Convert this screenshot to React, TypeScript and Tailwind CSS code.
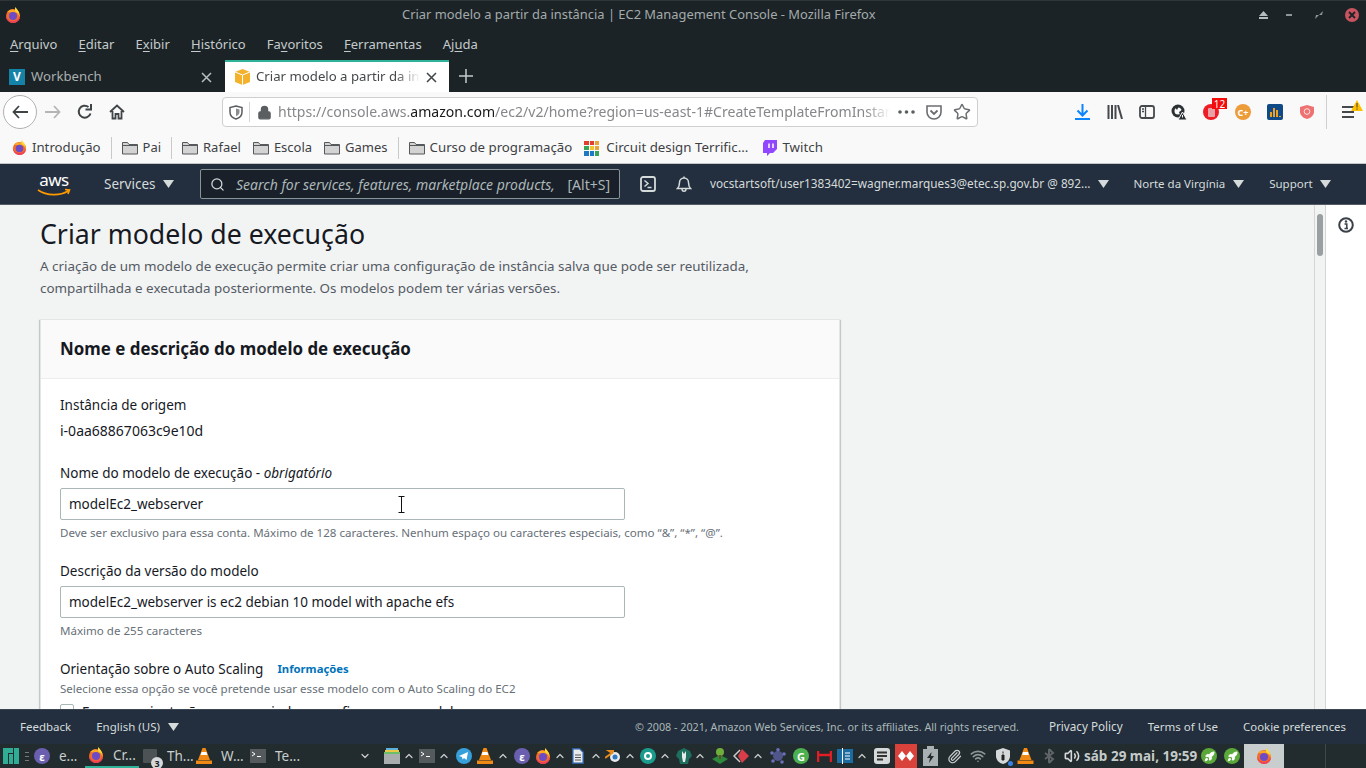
import { ReactNode } from "react";
import { ChevronUp, ChevronDown, Lock, Star, Search, Paperclip, Volume2, Wifi, Rocket } from "lucide-react";

const sans = "font-['Noto_Sans',sans-serif]";

function Fox({ size = 16 }: { size?: number }) {
  return (
    <svg width={size} height={size} viewBox="0 0 16 16" className="shrink-0">
      <circle cx="8" cy="9" r="7" fill="#f26b2a" />
      <path d="M2 5 C5 2 8 2 9 3 C13 4 15 7 15 10 L12 6 Z" fill="#f9a825" />
      <path d="M10 0 C12 2 14 4 14.5 7 L10 4 Z" fill="#fdd835" />
      <circle cx="8" cy="9" r="4" fill="#6d4bc4" />
      <path d="M1 9 C1 13 5 16 8 16 C12 16 15 13 15 9 C14 12 11 14 8 14 C5 14 2 12 1 9 Z" fill="#ef3f5a" />
    </svg>
  );
}

function Folder() {
  return (
    <svg width="16" height="14" viewBox="0 0 16 14" className="shrink-0">
      <path d="M.5 13V1.500h5l1.500 2h8.500V13Z" fill="#d3d3d3" stroke="#55595c" />
      <path d="M.5 4.500h15" stroke="#55595c" />
    </svg>
  );
}

function Caret({ className = "" }: { className?: string }) {
  return (
    <svg width="11" height="8" viewBox="0 0 11 8" className={className}>
      <path d="M0 0h11L5.500 8Z" fill="currentColor" />
    </svg>
  );
}

function Close({ color }: { color: string }) {
  return (
    <svg width="11" height="11" viewBox="0 0 11 11" className="ml-auto shrink-0">
      <path d="M1 1l9 9M10 1l-9 9" stroke={color} strokeWidth="1.500" />
    </svg>
  );
}

function Term() {
  return (
    <svg width="16" height="14" viewBox="0 0 16 14" className="shrink-0">
      <rect width="16" height="14" fill="#555b5c" />
      <path d="M2 3l3 2-3 2M7 7.500h4" fill="none" stroke="#fff" />
    </svg>
  );
}

function Cone({ w = 16 }: { w?: number }) {
  return (
    <svg width={w} height="16" viewBox="0 0 16 16" className="shrink-0">
      <path d="M6.500 0h3L14 12H2Z" fill="#f08a14" />
      <path d="M5.500 4h5l.8 3H4.700Z" fill="#fff" />
      <path d="M0 12.500h16V16H0Z" fill="#f08a14" />
    </svg>
  );
}

function Emacs() {
  return (
    <div className="flex h-4 w-4 shrink-0 items-center justify-center rounded-full bg-[#6a5fae] text-[11px] font-bold leading-none text-white">ε</div>
  );
}

function Up({ className = "" }: { className?: string }) {
  return <ChevronUp size={12} strokeWidth={2.5} className={`shrink-0 text-[#c8cccc] ${className}`} />;
}

function Bookmark({ children, icon, className = "" }: { children: ReactNode; icon: ReactNode; className?: string }) {
  return (
    <div className={`flex items-center gap-[5px] ${className}`}>
      {icon}
      <span>{children}</span>
    </div>
  );
}

function BarSep({ className = "" }: { className?: string }) {
  return <div className={`h-[22px] w-px bg-[#c9c9c9] ${className}`} />;
}

function Field({ value }: { value: string }) {
  return (
    <div className="mt-[5px] flex h-8 w-[565px] items-center rounded-[2px] border border-[#aab7b8] bg-white px-2 text-[13.5px] text-[#16191f]">
      {value}
    </div>
  );
}

function Mn({ children }: { children: string }) {
  return <span className="underline underline-offset-2">{children}</span>;
}

function TitleBar() {
  return (
    <div className="flex h-[30px] shrink-0 items-center border-t border-[#2d3538] bg-[#1b2326] pb-[2px] pl-[5px] pr-[7px]">
      <Fox size={16} />
      <div className="ml-[381px] text-[12.9px] text-[#a4aaac]">Criar modelo a partir da instância | EC2 Management Console - Mozilla Firefox</div>
      <div className="ml-auto flex items-center">
        <svg width="9" height="8" viewBox="0 0 9 8"><path d="M4.500 0 9 5H0ZM0 6h9v2H0Z" fill="#b4bcbd" /></svg>
        <div className="ml-[18px] h-[2px] w-[6px] bg-[#8f9697]" />
        <svg width="10" height="10" viewBox="0 0 10 10" className="ml-[22px]"><path d="M5 5 9 1 8 5Zm0 0L1 9 2 5Z" fill="#8f9697" /></svg>
        <div className="ml-[21px] flex h-[14px] w-[14px] items-center justify-center rounded-full bg-[#c9545f]">
          <svg width="8" height="8" viewBox="0 0 8 8"><path d="M1 1l6 6M7 1 1 7" stroke="#1b2326" strokeWidth="1.800" /></svg>
        </div>
      </div>
    </div>
  );
}

function MenuBar() {
  return (
    <div className="flex h-[30px] shrink-0 items-center gap-[21.200px] bg-[#1b2326] pl-[10px] text-[13px] text-[#c5cbcc]">
      <span><Mn>A</Mn>rquivo</span>
      <span><Mn>E</Mn>ditar</span>
      <span>E<Mn>x</Mn>ibir</span>
      <span><Mn>H</Mn>istórico</span>
      <span>Fa<Mn>v</Mn>oritos</span>
      <span><Mn>F</Mn>erramentas</span>
      <span>Aj<Mn>u</Mn>da</span>
    </div>
  );
}

function Tabs() {
  return (
    <div className="flex h-8 shrink-0 items-stretch bg-[#1b2326] text-[13.2px]">
      <div className="flex w-[225px] items-center pl-[9px] pr-[13px] pt-[2px] text-[#a9afb0]">
        <div className="flex h-4 w-4 items-center justify-center bg-[#1582a8] text-[12px] font-bold leading-none text-white">V</div>
        <span className="ml-[6px]">Workbench</span>
        <Close color="#b9bebf" />
      </div>
      <div className="flex w-[224px] items-center border-t-2 border-[#2eb398] bg-white pl-[10px] pr-[12px] text-[#45494c]">
        <svg width="15" height="16" viewBox="0 0 15 16" className="shrink-0">
          <path d="M7.500 0 15 3v10l-7.500 3L0 13V3Z" fill="#f3b12c" />
          <path d="M0 3l7.500 3L15 3M7.500 6v10" stroke="#fff" fill="none" />
        </svg>
        <span className="ml-[6px] w-[164px] overflow-hidden whitespace-nowrap [mask-image:linear-gradient(to_right,black_85%,transparent)]">Criar modelo a partir da in</span>
        <Close color="#3f4447" />
      </div>
      <svg width="14" height="14" viewBox="0 0 14 14" className="ml-[10px] self-center"><path d="M7 0v14M0 7h14" stroke="#c5cbcc" strokeWidth="1.500" /></svg>
    </div>
  );
}

function NavToolbar() {
  return (
    <div className="flex h-10 shrink-0 items-center bg-[#f9f9fa] pl-[3px] text-[#45494c]">
      <div className="flex h-[34px] w-[34px] items-center justify-center rounded-full border border-[#b1b1b1] bg-white">
        <svg width="16" height="14" viewBox="0 0 16 14"><path d="M7 1 1.500 7 7 13M2 7h14" fill="none" stroke="#3f4447" strokeWidth="1.800" /></svg>
      </div>
      <svg width="16" height="14" viewBox="0 0 16 14" className="ml-[8px]"><path d="M9 1l5.500 6L9 13M14 7H0" fill="none" stroke="#b4b5b7" strokeWidth="1.800" /></svg>
      <svg width="16" height="16" viewBox="0 0 16 16" className="ml-[16px]"><path d="M13.500 9.500A6 6 0 1 1 11.500 3M14 0v5.500H8.500" fill="none" stroke="#3f4447" strokeWidth="2" /></svg>
      <svg width="16" height="16" viewBox="0 0 16 16" className="ml-[16px]"><path d="M1 8 8 1.500 15 8M3.500 7v7.500H6.500V10h3v4.500h3V7" fill="none" stroke="#3f4447" strokeWidth="1.800" /></svg>
      <div className="ml-[97px] flex h-[30px] w-[756px] items-center rounded-[4px] border border-[#cfcfd1] bg-white text-[14px]">
        <svg width="14" height="15" viewBox="0 0 14 15" className="ml-[6px]"><path d="M7 1 13 2.500V7c0 3.500-2.500 6-6 7C3.500 13 1 10.500 1 7V2.500Z" fill="none" stroke="#5a5e61" strokeWidth="1.500" /><path d="M7 3.500 10.500 4.400V7c0 2-1.500 3.500-3.500 4.300Z" fill="#8a8d90" /></svg>
        <div className="ml-[6px] h-[20px] w-px bg-[#d5d5d7]" />
        <Lock size={15} fill="#5a5e61" strokeWidth={2} className="ml-[7px] shrink-0 text-[#5a5e61]" />
        <div className="ml-[6px] w-[612px] overflow-hidden whitespace-nowrap text-[14.05px] text-[#85878a] [mask-image:linear-gradient(to_right,black_96%,transparent)]">
          https://console.aws.<span className="text-[#18191b]">amazon.com</span>/ec2/v2/home?region=us-east-1#CreateTemplateFromInstan
        </div>
        <svg width="17" height="4" viewBox="0 0 17 4" className="ml-[8px] shrink-0"><circle cx="2" cy="2" r="1.800" fill="#5a5e61" /><circle cx="8.500" cy="2" r="1.800" fill="#5a5e61" /><circle cx="15" cy="2" r="1.800" fill="#5a5e61" /></svg>
        <svg width="16" height="15" viewBox="0 0 16 15" className="ml-[11px]"><path d="M1 1h14v6c0 4-3 7-7 7s-7-3-7-7Z" fill="none" stroke="#6b6e71" strokeWidth="1.600" /><path d="M4.500 5.500 8 9l3.500-3.500" fill="none" stroke="#6b6e71" strokeWidth="1.800" /></svg>
        <Star size={18} strokeWidth={2} className="ml-[11px] text-[#6b6e71]" />
      </div>
      <svg width="15" height="16" viewBox="0 0 15 16" className="ml-[97px]"><path d="M7.500 0v11M2.500 6.500l5 5 5-5M0 15h15" fill="none" stroke="#0a84ff" strokeWidth="2" /></svg>
      <svg width="16" height="14" viewBox="0 0 16 14" className="ml-[17px]"><path d="M1.500 0v14M5 0v14M8.500 0v14M11 0l4 14" fill="none" stroke="#45494c" strokeWidth="2" /></svg>
      <svg width="16" height="14" viewBox="0 0 16 14" className="ml-[16px]"><rect x="1" y="1" width="14" height="12" rx="2" fill="none" stroke="#45494c" strokeWidth="1.800" /><path d="M6.500 1v12M3 4h2M3 6.500h2" stroke="#45494c" strokeWidth="1.300" /></svg>
      <svg width="16" height="16" viewBox="0 0 16 16" className="ml-[16px]"><circle cx="7" cy="7" r="6.500" fill="#2b3033" /><circle cx="7" cy="7" r="3.500" fill="#f9f9fa" /><path d="M3 2h5L6 6ZM8 8l3-2 1 3-3 2Z" fill="#2b3033" /><path d="M11.500 8 16 16H7Z" fill="#2b3033" stroke="#f9f9fa" /><path d="M11.500 11v2.500" stroke="#f9f9fa" /></svg>
      <div className="relative ml-[16px] flex h-4 w-4 items-center justify-center rounded-full bg-[#ee1c25]">
        <div className="h-[9px] w-[7px] rounded-[1px] bg-[#e8a2a5]" />
        <div className="absolute left-[9px] top-[-6px] flex h-[11px] w-[15px] items-center justify-center bg-[#f40b0b] text-[10px] leading-none text-white">12</div>
      </div>
      <div className="ml-[16px] flex h-4 w-4 items-center justify-center rounded-full bg-[#ed9c3a] text-[9px] font-bold leading-none text-white">C+</div>
      <div className="ml-[16px] flex h-4 w-4 items-end justify-center gap-[1px] rounded-[2px] bg-[#0f4a87] pb-[3px]">
        <div className="h-[5px] w-[2px] bg-[#f0a020]" />
        <div className="h-[9px] w-[2px] bg-[#f0a020]" />
        <div className="h-[7px] w-[2px] bg-[#f0a020]" />
        <div className="h-[1px] w-[2px] bg-[#f0a020]" />
      </div>
      <svg width="16" height="16" viewBox="0 0 16 16" className="ml-[16px]"><path d="M8 1 15 3v5c0 3-3 6-7 7-4-1-7-4-7-7V3Z" fill="#ee7272" /><circle cx="8" cy="7.500" r="2.800" fill="none" stroke="#fbe3e3" /></svg>
      <div className="ml-[11px] h-[34px] w-px bg-[#cfcfd1]" />
      <div className="relative ml-[15px] flex h-3 w-3 flex-col justify-between">
        <div className="h-[2px] w-3 bg-[#45494c]" />
        <div className="h-[2px] w-3 bg-[#45494c]" />
        <div className="h-[2px] w-3 bg-[#45494c]" />
        <svg width="12" height="11" viewBox="0 0 12 11" className="absolute left-[9px] top-[-6px]"><path d="M6 0 12 11H0Z" fill="#ffbf00" /><path d="M6 3v4.500M6 8.500v1.200" stroke="#3a3a3a" /></svg>
      </div>
    </div>
  );
}

function Bookmarks() {
  return (
    <div className="flex h-8 shrink-0 items-center border-b border-[#c6c7c9] bg-[#f9f9fa] pl-3 pt-[1px] text-[13px] text-[#3e4144]">
      <Bookmark icon={<Fox size={15} />}><span className="text-[13.200px]">Introdução</span></Bookmark>
      <BarSep className="ml-[10px]" />
      <Bookmark icon={<Folder />} className="ml-[10px]">Pai</Bookmark>
      <BarSep className="ml-[10px]" />
      <Bookmark icon={<Folder />} className="ml-[10px]">Rafael</Bookmark>
      <Bookmark icon={<Folder />} className="ml-[12px]">Escola</Bookmark>
      <Bookmark icon={<Folder />} className="ml-[12px]">Games</Bookmark>
      <BarSep className="ml-[10px]" />
      <Bookmark icon={<Folder />} className="ml-[10px]"><span className="text-[13.250px]">Curso de programação</span></Bookmark>
      <div className="ml-[12px] grid h-[15px] w-[15px] grid-cols-3 gap-[1px]">
        <div className="bg-[#e2402f]" /><div className="bg-[#e2402f]" /><div className="bg-[#e8a33a]" />
        <div className="bg-[#39a35a]" /><div className="bg-[#f2c72e]" /><div className="bg-[#e8a33a]" />
        <div className="bg-[#1e78c4]" /><div className="bg-[#1e78c4]" /><div className="bg-[#39a35a]" />
      </div>
      <span className="ml-[7px] text-[13.300px]">Circuit design Terrific...</span>
      <svg width="14" height="16" viewBox="0 0 14 16" className="ml-[15px]"><path d="M2 0h12v9l-4 4H7l-3 3v-3H0V3Z" fill="#9146ff" /><path d="M6 3.500V8M10 3.500V8" stroke="#fff" strokeWidth="1.500" /></svg>
      <span className="ml-[5px] text-[13.300px]">Twitch</span>
    </div>
  );
}

function AwsNav() {
  return (
    <div className="flex h-[41px] shrink-0 items-center border-b border-[#545b64] bg-[#232f3e] text-[13.5px] text-[#d5dbdb]">
      <div className="relative ml-[37px] h-[26px] w-[34px] shrink-0">
        <div className="text-center text-[17px] leading-[17px] tracking-[-0.5px] text-white">aws</div>
        <svg width="34" height="9" viewBox="0 0 34 9" className="absolute bottom-0 left-0"><path d="M1 2c9 6 22 6 30 1M28 1.500l4.500.5-1.500 4" fill="none" stroke="#f90" strokeWidth="1.600" /></svg>
      </div>
      <span className="ml-[33px] w-[52px]">Services</span>
      <Caret className="ml-[7px] text-[#d5dbdb]" />
      <div className="ml-[26px] flex h-[30px] w-[420px] items-center rounded-[2px] border border-[#879596] bg-[#1a2029] pl-[9px] pr-[9px] text-[14px]">
        <Search size={15} strokeWidth={2} className="text-[#d5dbdb]" />
        <span className="ml-[11px] italic text-[#aab7b8]">Search for services, features, marketplace products,</span>
        <span className="ml-auto text-[#aab7b8]">[Alt+S]</span>
      </div>
      <svg width="16" height="16" viewBox="0 0 16 16" className="ml-[20px]"><rect x="1" y="1" width="14" height="14" rx="2" fill="none" stroke="#d5dbdb" strokeWidth="1.800" /><path d="M4.500 4.500 8 7.500 4.500 10.500M7.500 11.500h4" fill="none" stroke="#d5dbdb" strokeWidth="1.500" /></svg>
      <svg width="16" height="16" viewBox="0 0 16 16" className="ml-[20px]"><path d="M1.500 12.500C3 11 3.500 10 3.500 6.500a4.500 4.500 0 0 1 9 0c0 3.500.5 4.500 2 6ZM6 13c0 3 4 3 4 0M8 2V.5" fill="none" stroke="#d5dbdb" strokeWidth="1.500" /></svg>
      <span className="ml-[18px] text-[11.760px]">vocstartsoft/user1383402=wagner.marques3@etec.sp.gov.br @ 892...</span>
      <Caret className="ml-[7px]" />
      <span className="ml-[25px] text-[11.500px]">Norte da Virgínia</span>
      <Caret className="ml-[8px]" />
      <span className="ml-[25px] text-[11.500px]">Support</span>
      <Caret className="ml-[7px]" />
    </div>
  );
}

function Main() {
  return (
    <div className="relative flex min-h-0 flex-1 overflow-hidden bg-[#f2f3f3] text-[#16191f]">
      <div className="w-[1314px] shrink-0 pl-10 pt-[11px]">
        <h1 className="text-[26.7px] font-normal leading-9 text-[#16191f]">Criar modelo de execução</h1>
        <p className="mt-[3px] w-[800px] text-[13.4px] leading-[22px] text-[#545b64]">
          A criação de um modelo de execução permite criar uma configuração de instância salva que pode ser reutilizada,
          <br />
          compartilhada e executada posteriormente. Os modelos podem ter várias versões.
        </p>
        <div className="mt-[20px] w-[800px] border border-[#e4e6e6] bg-white shadow-[0_1px_1px_0_rgba(0,28,36,0.3),1px_1px_1px_0_rgba(0,28,36,0.15),-1px_1px_1px_0_rgba(0,28,36,0.15)]">
          <div className="flex h-[59px] items-center border-b border-[#eaeded] bg-[#fafafa] px-[19px]">
            <h2 className="text-[16.9px] font-bold text-[#16191f]">Nome e descrição do modelo de execução</h2>
          </div>
          <div className="px-[19px] pt-4 text-[13.5px]">
            <div className="leading-5">Instância de origem</div>
            <div className="mt-[6px] text-[14px] leading-5">i-0aa68867063c9e10d</div>
            <div className="mt-[22px] leading-5">
              Nome do modelo de execução - <span className="italic">obrigatório</span>
            </div>
            <Field value="modelEc2_webserver" />
            <div className="mt-[5px] text-[11.55px] leading-4 text-[#687078]">
              Deve ser exclusivo para essa conta. Máximo de 128 caracteres. Nenhum espaço ou caracteres especiais, como “&amp;”, “*”, “@”.
            </div>
            <div className="mt-5 leading-5">Descrição da versão do modelo</div>
            <Field value="modelEc2_webserver is ec2 debian 10 model with apache efs" />
            <div className="mt-[5px] text-[11.55px] leading-4 text-[#687078]">Máximo de 255 caracteres</div>
            <div className="mt-5 flex items-center leading-5">
              <span>Orientação sobre o Auto Scaling</span>
              <span className="ml-[14px] text-[11.3px] font-bold text-[#0073bb]">Informações</span>
            </div>
            <div className="mt-[2px] text-[11.55px] leading-4 text-[#687078]">
              Selecione essa opção se você pretende usar esse modelo com o Auto Scaling do EC2
            </div>
            <div className="mt-[7px] flex items-start">
              <div className="h-[14px] w-[14px] rounded-[2px] border border-[#aab7b8] bg-white" />
              <span className="ml-2 leading-4">Forneça orientação para me ajudar a configurar um modelo</span>
            </div>
          </div>
        </div>
      </div>
      <div className="w-3 shrink-0 border-x border-[#d5d5d5] pl-[2px] pt-[9px]">
        <div className="h-[42px] w-[6px] rounded-full bg-[#9aa0a1]" />
      </div>
      <div className="flex flex-1 justify-center bg-white pt-[12px]">
        <svg width="16" height="16" viewBox="0 0 16 16"><circle cx="8" cy="8" r="6.800" fill="none" stroke="#3a4048" strokeWidth="2" /><path d="M6.500 7h2.300v4M6.500 11.500h3.500" fill="none" stroke="#3a4048" strokeWidth="1.500" /><circle cx="8" cy="4.500" r="1.200" fill="#3a4048" /></svg>
      </div>
      <svg width="7" height="17" viewBox="0 0 7 17" className="absolute left-[398px] top-[291px]"><path d="M.5.500h6M.5 16.500h6M3.500.500v16" stroke="#111" fill="none" /></svg>
    </div>
  );
}

function Footer() {
  return (
    <div className="flex h-[35px] shrink-0 items-center border-t border-[#3b4653] bg-[#232f3e] pl-5 pr-5 text-[11.5px] text-[#d5dbdb]">
      <span>Feedback</span>
      <span className="ml-[25px]">English (US)</span>
      <Caret className="ml-2" />
      <span className="ml-auto text-[10.75px] text-[#aab7b8]">© 2008 - 2021, Amazon Web Services, Inc. or its affiliates. All rights reserved.</span>
      <span className="ml-[30px] text-[11.7px]">Privacy Policy</span>
      <span className="ml-[25px]">Terms of Use</span>
      <span className="ml-[25px] text-[11.4px]">Cookie preferences</span>
    </div>
  );
}

function Taskbar() {
  return (
    <div className="flex h-6 shrink-0 items-center bg-[#222b2d] text-[13.5px] text-[#c9cecf]">
      <svg width="16" height="16" viewBox="0 0 16 16" className="ml-[3px] shrink-0"><path d="M0 0h10v5H5v11H0ZM6 6h4v10H6ZM11 0h5v16h-5Z" fill="#2fae95" /></svg>
      <div className="ml-[6px] flex h-[9px] w-1 flex-col justify-between">
        <div className="h-px bg-[#777]" /><div className="h-px bg-[#777]" /><div className="h-px bg-[#777]" />
      </div>
      <div className="ml-[5px]"><Emacs /></div>
      <span className="ml-[9px] w-[18px]">e...</span>
      <div className="ml-[8px] flex h-full w-[54px] items-center border-b-2 border-[#2eb398] pl-[3px]">
        <Fox />
        <span className="ml-[9px]">Cr...</span>
      </div>
      <div className="relative ml-[4px] h-[14px] w-[14px] shrink-0 rounded-[1px] bg-[#4d5355]">
        <div className="absolute left-[8px] top-[8px] flex h-[12px] w-[12px] items-center justify-center rounded-full bg-[#d5d9d9] text-[9px] font-bold leading-none text-[#222]">3</div>
      </div>
      <span className="ml-[10px] w-[25px]">Th...</span>
      <div className="ml-[4px]"><Cone /></div>
      <span className="ml-[9px] w-[22px]">W...</span>
      <div className="ml-[7px]"><Term /></div>
      <span className="ml-[9px] w-[24px]">Te...</span>
      <ChevronDown size={12} strokeWidth={2.5} className="ml-[60px] shrink-0 text-[#c8cccc]" />
      <div className="ml-[13px] flex h-4 w-4 shrink-0 flex-col">
        <div className="mx-[2px] h-[2px] bg-[#5fb0d6]" />
        <div className="mx-[1px] h-[2px] bg-[#e8c94a]" />
        <div className="h-[2px] bg-[#6bbf6a]" />
        <div className="flex-1 bg-[#a9adae]" />
      </div>
      <Up className="ml-[3px]" />
      <div className="ml-[4px]"><Term /></div>
      <Up className="ml-[3px]" />
      <svg width="16" height="16" viewBox="0 0 16 16" className="ml-[6px] shrink-0"><circle cx="8" cy="8" r="8" fill="#37a0db" /><path d="M3 8l9-4-1.500 8L8 10 6.500 11.500 6 9Z" fill="#fff" /></svg>
      <div className="ml-[5px]"><Cone /></div>
      <Up className="ml-[4px]" />
      <div className="ml-[5px]"><Emacs /></div>
      <div className="ml-[5px]"><Fox /></div>
      <Up className="ml-[3px]" />
      <svg width="12" height="16" viewBox="0 0 12 16" className="ml-[6px] shrink-0"><path d="M0 0h8l4 4v12H0Z" fill="#2e5d9e" /><path d="M1.500 1.500h6l3 3v10h-9Z" fill="#e8eaec" /><path d="M3 7h6M3 9.500h6M3 12h6" stroke="#555" /></svg>
      <Up className="ml-[6px]" />
      <svg width="16" height="14" viewBox="0 0 16 14" className="ml-[3px] shrink-0"><circle cx="10" cy="8" r="5" fill="#e8eaec" /><circle cx="10" cy="8" r="2.500" fill="#2f77c4" /><path d="M0 9 7 4 4 2h5" fill="none" stroke="#ec8a1a" strokeWidth="2" /></svg>
      <Up className="ml-[3px]" />
      <div className="ml-[4px] flex h-4 w-4 shrink-0 items-center justify-center rounded-full bg-[#1a9b8c]"><div className="h-2 w-2 rounded-full border-2 border-white" /></div>
      <Up className="ml-[3px]" />
      <svg width="16" height="16" viewBox="0 0 16 16" className="ml-[5px] shrink-0"><path d="M8 0l6 3 2 5-3 3-1 5H4l-1-5-3-3 2-5Z" fill="#1f6f5f" /><path d="M6 3v6l1 5h2l1-5V3L8 6Z" fill="#e8eaec" /></svg>
      <Up className="ml-[2px]" />
      <svg width="16" height="16" viewBox="0 0 16 16" className="ml-[6px] shrink-0"><path d="M0 11l8-4 8 4-8 5Z" fill="#2c8a3a" /><circle cx="8" cy="4" r="4" fill="#6fae3a" /><path d="M7 7h2v4H7Z" fill="#6b4a2a" /></svg>
      <svg width="16" height="14" viewBox="0 0 16 14" className="ml-[5px] shrink-0"><path d="M9 0l7 7-7 7-4-7Z" fill="#d93d4a" /><path d="M7 1 1 7l6 6" fill="none" stroke="#ccc" strokeWidth="1.500" /></svg>
      <Up className="ml-[3px]" />
      <svg width="16" height="16" viewBox="0 0 16 16" className="ml-[6px] shrink-0"><circle cx="8" cy="8" r="5" fill="#50558a" /><circle cx="8" cy="1.800" r="1.800" fill="#6a70b8" /><circle cx="14" cy="6" r="1.800" fill="#6a70b8" /><circle cx="12" cy="14" r="1.800" fill="#6a70b8" /><circle cx="3" cy="13" r="1.800" fill="#6a70b8" /><circle cx="2" cy="5" r="1.800" fill="#6a70b8" /></svg>
      <div className="ml-[7px] flex h-4 w-4 shrink-0 items-center justify-center rounded-full bg-[#4caf50] text-[11px] font-bold leading-none text-white">G</div>
      <svg width="15" height="11" viewBox="0 0 15 11" className="ml-[8px] shrink-0"><path d="M1 0v11M14 0v11M1 4h13" fill="none" stroke="#e11d25" strokeWidth="2.500" /></svg>
      <svg width="16" height="16" viewBox="0 0 16 16" className="ml-[5px] shrink-0"><path d="M0 1h16v14H0Z" fill="#1c6ba0" /><path d="M5.500 0v16" stroke="#fff" /><path d="M8 5h5M8 8h5M8 11h5" stroke="#fff" /></svg>
      <Up className="ml-[3px]" />
      <svg width="16" height="16" viewBox="0 0 16 16" className="ml-[6px] shrink-0"><rect width="16" height="16" rx="3" fill="#d5d9d9" /><path d="M3 4.500h10M3 8h10M3 11.500h6" stroke="#333" strokeWidth="1.800" /></svg>
      <div className="ml-[5px] flex h-full w-[22px] shrink-0 items-center justify-center bg-[#d9423a]">
        <svg width="16" height="10" viewBox="0 0 16 10"><path d="M4 0l4 5-4 5-4-5ZM12 0l4 5-4 5-4-5Z" fill="#fff" /></svg>
      </div>
      <svg width="15" height="20" viewBox="0 0 15 20" className="ml-[6px] shrink-0"><path d="M0 3h4V0h7v3h4v17H0Z" fill="#a9b0b1" /><path d="M8.500 6 4 12h3l-1 5 5-7H8Z" fill="#222b2d" /></svg>
      <Paperclip size={15} className="ml-[9px] shrink-0 text-[#c9cecf]" />
      <Wifi size={16} strokeWidth={2.5} className="ml-[8px] shrink-0 text-[#8e9596]" />
      <div className="relative ml-[9px] shrink-0">
        <svg width="16" height="16" viewBox="0 0 16 16" className="block"><path d="M8 0l7 2.500V8c0 4-3 7-7 8-4-1-7-4-7-8V2.500Z" fill="#d5d9d9" /><path d="M8 3.500v2M7 7h2v5H7Z" stroke="#222" fill="#222" /></svg>
        <div className="absolute bottom-[-2px] right-[-2px] h-[5px] w-[5px] rounded-full bg-[#3a80e0]" />
      </div>
      <div className="ml-[5px]"><Cone w={19} /></div>
      <svg width="14" height="16" viewBox="0 0 14 16" className="ml-[7px] shrink-0"><path d="M7 1l4 4-8 6M7 15l4-4-8-6M7 1v14" fill="none" stroke="#5f6566" strokeWidth="2" /></svg>
      <Volume2 size={16} strokeWidth={2.4} className="ml-[8px] shrink-0 text-[#d5d9d9]" />
      <span className="ml-[4px] w-[112px] whitespace-nowrap text-[13.5px] font-bold text-[#c5caca]">sáb 29 mai, 19:59</span>
      <div className="ml-[5px] flex h-4 w-4 shrink-0 items-center justify-center rounded-full bg-[#5aa83a]"><Rocket size={11} fill="#fff" className="text-white" /></div>
      <div className="ml-[7px] flex h-4 w-4 shrink-0 items-center justify-center rounded-full bg-[#5aa83a]"><Rocket size={11} fill="#fff" className="text-white" /></div>
      <div className="ml-1 flex h-full w-10 shrink-0 items-center justify-center bg-[#c8cdce]"><Fox /></div>
      <div className="ml-[41px] h-full w-px bg-[#3f4749]" />
    </div>
  );
}

export default function App() {
  return (
    <div className={`flex h-[768px] w-[1366px] flex-col overflow-hidden ${sans}`}>
      <TitleBar />
      <MenuBar />
      <Tabs />
      <NavToolbar />
      <Bookmarks />
      <AwsNav />
      <Main />
      <Footer />
      <Taskbar />
    </div>
  );
}
